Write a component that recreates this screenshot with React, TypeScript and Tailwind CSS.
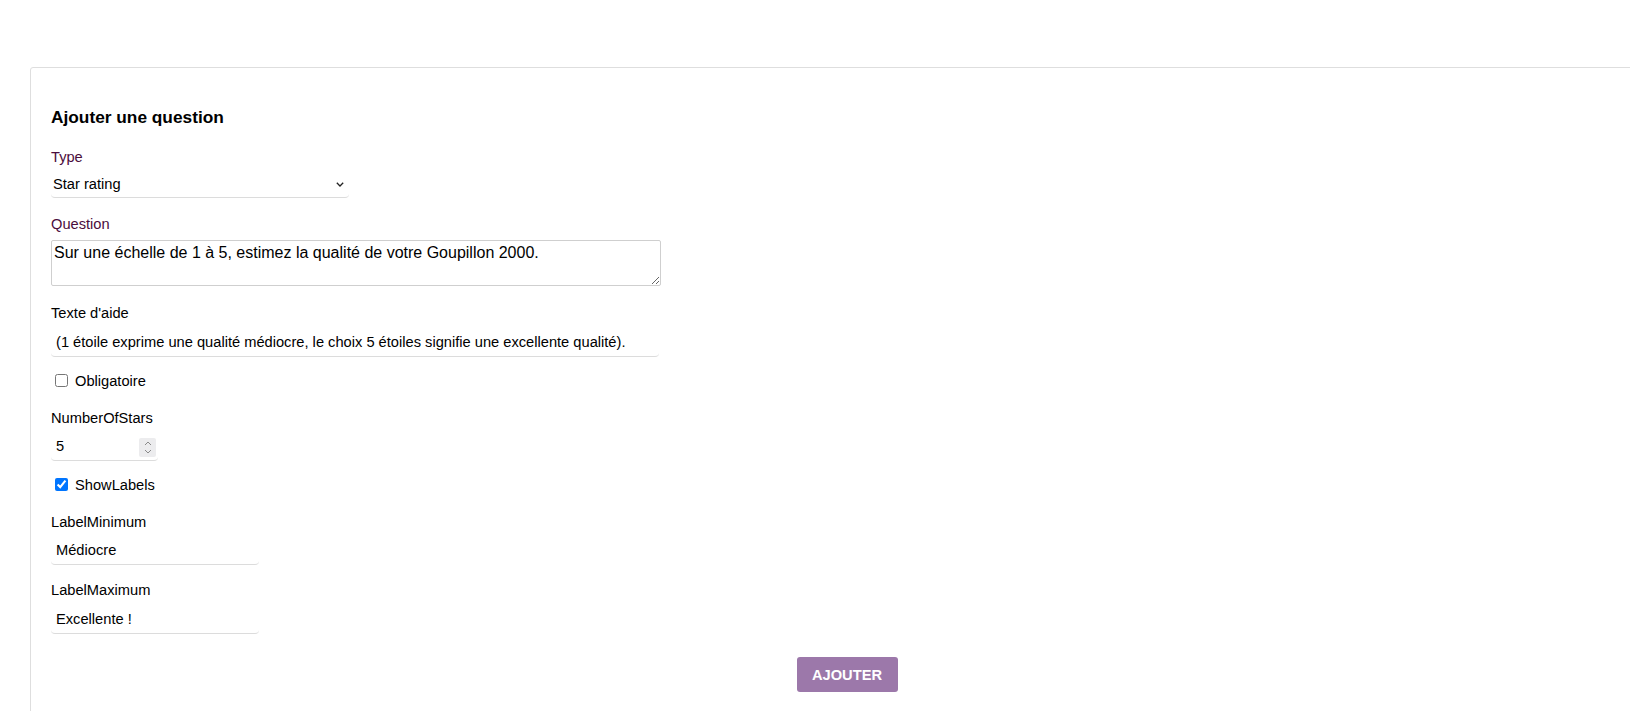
import { useState } from "react";

function FieldLabel({ children, purple }: { children: React.ReactNode; purple?: boolean }) {
  return (
    <label className={`block h-[17px] leading-[17px] ${purple ? "text-[#4b0d3d]" : "text-black"}`}>
      {children}
    </label>
  );
}

function LineInput({ value, width }: { value: string; width: string }) {
  const [v, setV] = useState(value);
  return (
    <input
      type="text"
      value={v}
      onChange={(e) => setV(e.target.value)}
      className={`block h-[26px] ${width} rounded-[4px] border-0 border-b border-[#dcdcdc] px-[5px] pb-[3px] text-black outline-none`}
    />
  );
}

export default function App() {
  const [required, setRequired] = useState(false);
  const [showLabels, setShowLabels] = useState(true);
  const [stars, setStars] = useState("5");

  return (
    <div className="h-screen w-full overflow-hidden bg-white font-['Liberation_Sans',Arial,sans-serif] text-[14.67px] text-black">
      <div className="ml-[30px] mt-[67px] w-full rounded-tl-[3px] border border-[#dedede] pl-5 pt-[39px] pr-5 pb-10">
        <h3 className="h-[20px] text-[17.3px] font-bold leading-[20px]">Ajouter une question</h3>

        <div className="mt-[22px]">
          <FieldLabel purple>Type</FieldLabel>
          <div className="relative mt-[6px] w-[298px]">
            <select className="block h-[26px] w-full appearance-none rounded-[4px] border-0 border-b border-[#dcdcdc] bg-white pb-[2px] pl-[2px] text-[14.67px] text-black outline-none">
              <option>Star rating</option>
              <option>Text</option>
              <option>Choice</option>
            </select>
            <svg
              className="pointer-events-none absolute right-[5px] top-[10px]"
              width="8"
              height="5"
              viewBox="0 0 8 5"
              fill="none"
            >
              <path d="M0.8 0.8 L4 4 L7.2 0.8" stroke="#222" strokeWidth="1.3" />
            </svg>
          </div>
        </div>

        <div className="mt-[18px]">
          <FieldLabel purple>Question</FieldLabel>
          <textarea
            defaultValue="Sur une échelle de 1 à 5, estimez la qualité de votre Goupillon 2000."
            className="mt-[7px] block h-[46px] w-[610px] rounded-[2px] border border-[#cfcfcf] px-[2px] pt-[2px] text-[16px] leading-[19px] text-black outline-none"
          />
        </div>

        <div className="mt-[19px]">
          <FieldLabel>Texte d'aide</FieldLabel>
          <div className="mt-[9px]">
            <LineInput
              value="(1 étoile exprime une qualité médiocre, le choix 5 étoiles signifie une excellente qualité)."
              width="w-[608px]"
            />
          </div>
        </div>

        <label className="mt-[14px] flex h-[19px] items-center">
          <input
            type="checkbox"
            checked={required}
            onChange={(e) => setRequired(e.target.checked)}
            className="ml-1 mr-[7px] h-[13px] w-[13px]"
          />
          <span>Obligatoire</span>
        </label>

        <div className="mt-[20px]">
          <FieldLabel>NumberOfStars</FieldLabel>
          <div className="relative mt-[8px] w-[107px]">
            <input
              type="text"
              inputMode="numeric"
              value={stars}
              onChange={(e) => setStars(e.target.value)}
              className="block h-[26px] w-full rounded-[4px] border-0 border-b border-[#dcdcdc] px-[5px] pb-[3px] text-black outline-none"
            />
            <div className="absolute right-[2px] top-[3px] flex h-[19px] w-[17px] flex-col items-center justify-center gap-[3px] rounded-[2px] bg-[#ececee]">
              <svg width="8" height="5" viewBox="0 0 8 5" fill="none">
                <path d="M1 4 L4 1 L7 4" stroke="#8a8a8a" strokeWidth="1" />
              </svg>
              <svg width="8" height="5" viewBox="0 0 8 5" fill="none">
                <path d="M1 1 L4 4 L7 1" stroke="#8a8a8a" strokeWidth="1" />
              </svg>
            </div>
          </div>
        </div>

        <label className="mt-[14px] flex h-[19px] items-center">
          <input
            type="checkbox"
            checked={showLabels}
            onChange={(e) => setShowLabels(e.target.checked)}
            className="ml-1 mr-[7px] h-[13px] w-[13px] accent-[#0075ff]"
          />
          <span>ShowLabels</span>
        </label>

        <div className="mt-[20px]">
          <FieldLabel>LabelMinimum</FieldLabel>
          <div className="mt-[8px]">
            <LineInput value="Médiocre" width="w-[208px]" />
          </div>
        </div>

        <div className="mt-[17px]">
          <FieldLabel>LabelMaximum</FieldLabel>
          <div className="mt-[9px]">
            <LineInput value="Excellente !" width="w-[208px]" />
          </div>
        </div>

        <div className="mt-[23px] flex justify-center pl-[4px]">
          <button className="h-[35px] w-[101px] rounded-[3px] bg-[#9c78aa] text-[14.67px] font-bold text-white">
            AJOUTER
          </button>
        </div>
      </div>
    </div>
  );
}
